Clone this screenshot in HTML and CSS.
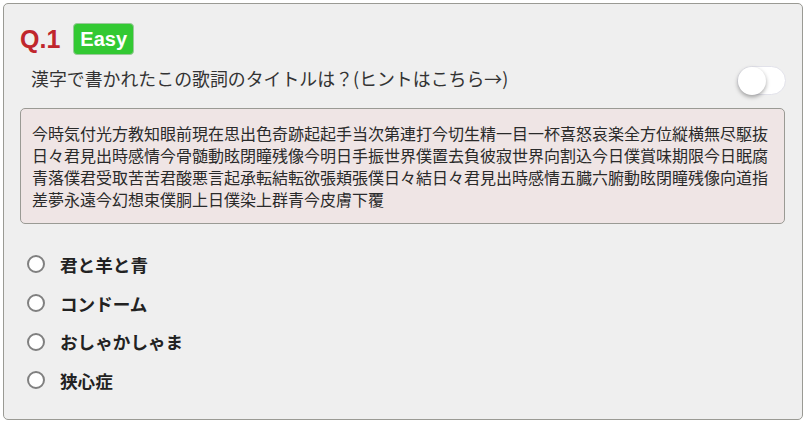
FILE: index.html
```html
<!DOCTYPE html>
<html lang="ja">
<head>
<meta charset="utf-8">
<title>Q.1</title>
<link rel="stylesheet" href="styles.css">
</head>
<body>
<div class="card">
  <div class="head">
    <span class="qnum">Q.1</span>
    <span class="badge">Easy</span>
  </div>
  <div class="q-row">
    <p class="question">漢字で書かれたこの歌詞のタイトルは？(ヒントはこちら→)</p>
    <span class="toggle"><span class="knob"></span></span>
  </div>
  <div class="lyrics">今時気付光方教知眼前現在思出色奇跡起起手当次第連打今切生精一目一杯喜怒哀楽全方位縦横無尽駆抜日々君見出時感情今骨髄動眩閉瞳残像今明日手振世界僕置去負彼寂世界向割込今日僕賞味期限今日眠腐青落僕君受取苦苦君酸悪言起承転結転欲張頬張僕日々結日々君見出時感情五臓六腑動眩閉瞳残像向道指差夢永遠今幻想束僕胴上日僕染上群青今皮膚下覆</div>
  <ul class="choices">
    <li><label class="choice"><input type="radio" name="q1"><span>君と羊と青</span></label></li>
    <li><label class="choice"><input type="radio" name="q1"><span>コンドーム</span></label></li>
    <li><label class="choice"><input type="radio" name="q1"><span>おしゃかしゃま</span></label></li>
    <li><label class="choice"><input type="radio" name="q1"><span>狭心症</span></label></li>
  </ul>
</div>
</body>
</html>
```

FILE: styles.css
```css
html, body {
  margin: 0;
  padding: 0;
  background: #ffffff;
}

body {
  font-family: "Noto Sans CJK JP", "Noto Sans", sans-serif;
  color: #333333;
}

.card {
  box-sizing: border-box;
  width: 800px;
  height: 417px;
  margin: 3px;
  padding: 19px 16px 0 16px;
  border: 1px solid #9a9a94;
  border-radius: 5px;
  background: #efefef;
}

.head {
  display: flex;
  align-items: center;
  gap: 13px;
  height: 32px;
}

.qnum {
  font-family: "Liberation Sans", Arial, sans-serif;
  font-weight: bold;
  font-size: 25px;
  color: #c0262c;
  line-height: 32px;
}

.badge {
  box-sizing: border-box;
  height: 32px;
  padding: 0 6px;
  display: flex;
  align-items: center;
  background: #33c933;
  border: 1px solid #9bc89b;
  border-radius: 4px;
  color: #ffffff;
  font-family: "Liberation Sans", Arial, sans-serif;
  font-weight: bold;
  font-size: 20px;
}

.q-row {
  display: flex;
  justify-content: space-between;
  align-items: flex-start;
  margin-top: 11px;
  padding-left: 11px;
}

.question {
  margin: 0;
  font-size: 17.9px;
  line-height: 24px;
  color: #333333;
}

.toggle {
  box-sizing: border-box;
  width: 49px;
  height: 29px;
  border: 1px solid #e2e2ea;
  border-radius: 15px;
  background: #ffffff;
  display: flex;
  align-items: center;
}

.knob {
  width: 28px;
  height: 28px;
  border-radius: 50%;
  background: #ffffff;
  box-shadow: 0 2px 4px rgba(0, 0, 0, 0.35);
}

.lyrics {
  margin-top: 13px;
  margin-right: 1px;
  padding: 13px 11px;
  border: 1px solid #9a9a94;
  border-radius: 5px;
  background: #efe5e5;
  font-size: 16px;
  line-height: 22px;
  color: #2a2a2a;
  word-break: break-all;
}

.choices {
  list-style: none;
  margin: 21px 0 0 0;
  padding: 0 0 0 7px;
}

.choices li {
  height: 38.7px;
  display: flex;
  align-items: center;
}

.choice {
  display: flex;
  align-items: center;
  gap: 15px;
  font-size: 17.6px;
  font-weight: bold;
  color: #222222;
}

.choice input {
  appearance: none;
  -webkit-appearance: none;
  box-sizing: border-box;
  flex-shrink: 0;
  margin: 0;
  width: 18px;
  height: 18px;
  border: 2px solid #808080;
  border-radius: 50%;
  background: #ffffff;
}
```
